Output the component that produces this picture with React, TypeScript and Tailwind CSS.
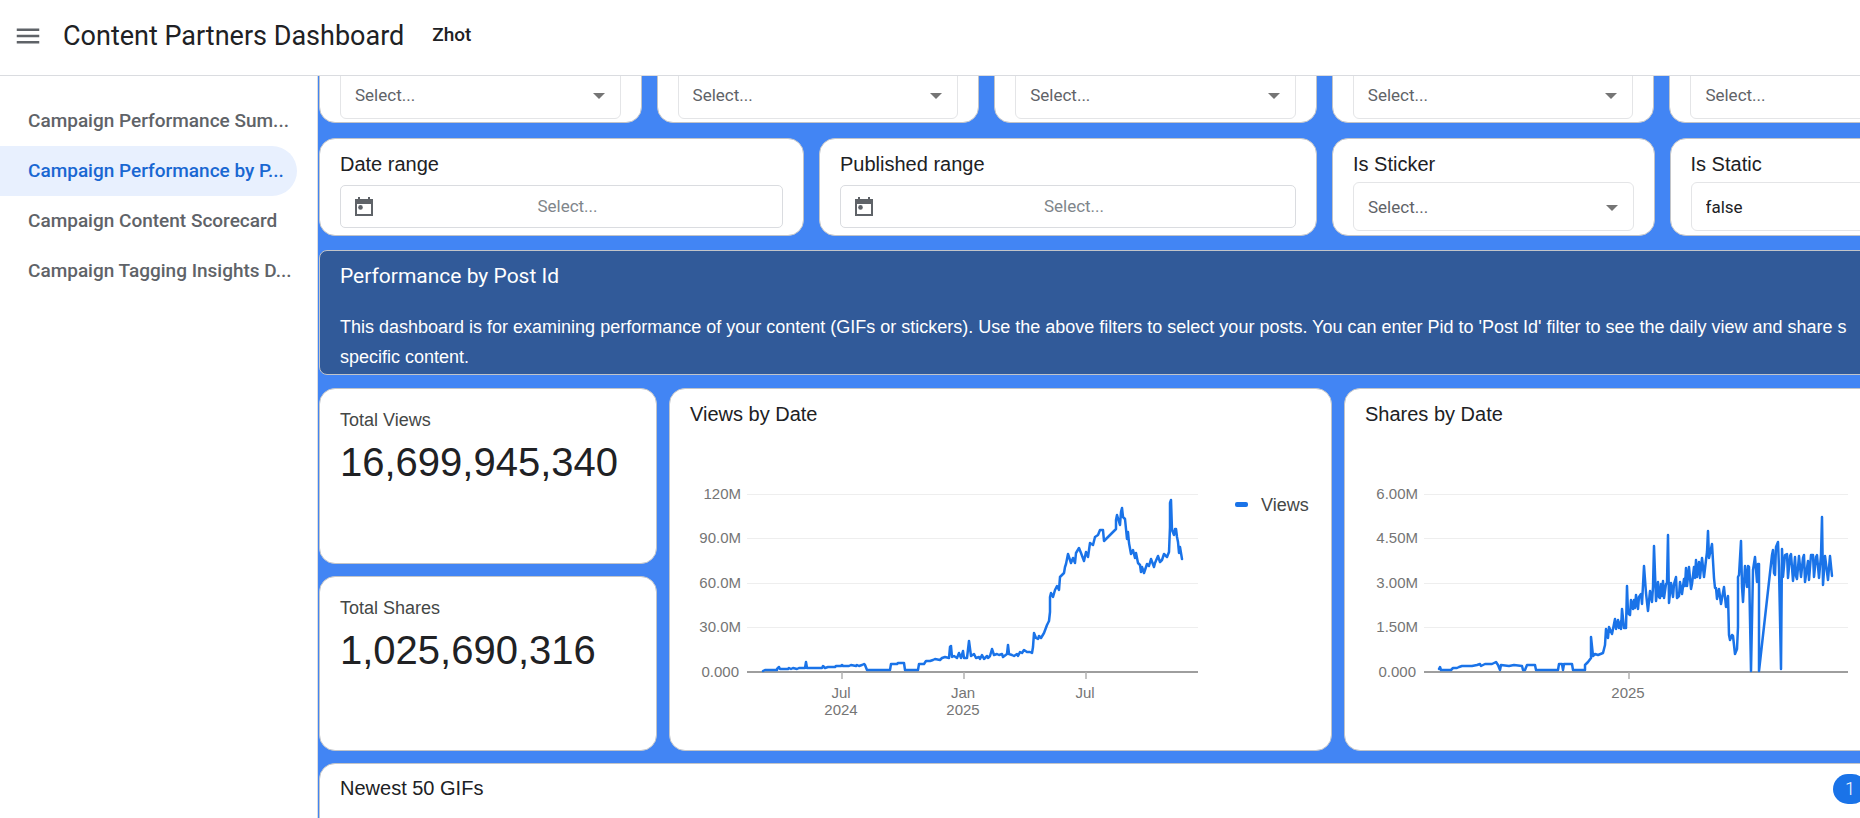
import type { ReactNode } from 'react';
import { MdMenu } from 'react-icons/md';

type Tick = { x: number; lines: string[] };

type ChartProps = {
  title: string;
  legend?: string;
  left: number;
  yLabels: string[];
  ticks: Tick[];
  plotWidth: number;
  points: string;
};

const pages = [
  { name: 'Campaign Performance Sum...', active: false },
  { name: 'Campaign Performance by P...', active: true },
  { name: 'Campaign Content Scorecard', active: false },
  { name: 'Campaign Tagging Insights D...', active: false },
];

const viewsPoints =
  '16,177 18,176 30,176 30,175 32,173 33,175 41,175 42,174 44,175 46,174 50,175 52,174 58,174 59,168 60,174 75,174 76,172 78,174 81,173 88,173 89,172 94,172 95,171 96,172 102,172 104,171 109,172 110,171 112,172 115,171 117,170 118,171 120,176 143,176 144,170 150,170 151,169 157,169 158,176 171,176 172,170 177,170 179,167 183,167 186,166 188,165 193,166 195,164 198,163 202,164 203,153 204,152 205,163 207,162 210,164 212,159 214,164 216,157 217,164 220,164 222,147 224,162 227,160 229,164 232,163 233,165 235,161 237,165 240,162 241,164 243,162 245,155 247,161 250,160 252,161 255,160 256,163 260,160 261,151 262,160 265,161 267,162 270,160 271,162 273,158 275,159 277,156 280,158 283,158 285,159 286,153 287,139 289,144 291,145 292,142 294,144 297,139 300,131 302,127 303,118 303,103 304,99 306,103 308,96 310,92 312,96 313,83 317,79 318,73 319,70 321,60 324,69 326,64 328,69 329,59 332,54 334,59 337,67 339,58 341,63 343,49 346,51 348,43 351,41 353,36 356,36 357,47 369,35 369,26 370,21 373,31 374,18 375,14 376,23 378,25 380,45 381,38 382,49 384,60 386,56 388,64 389,59 391,69 393,71 394,78 395,73 397,79 400,70 402,72 404,65 407,73 408,69 411,62 413,68 415,66 417,60 420,63 422,58 423,33 423,9 424,6 425,36 427,41 428,35 429,35 430,43 431,48 432,59 433,53 434,59 435,65';

const sharesPoints =
  '15,175 16,173 17,176 27,176 29,174 33,174 35,173 38,172 48,172 53,171 56,170 57,172 61,170 68,170 72,168 74,171 76,176 77,171 85,172 90,171 98,172 99,176 101,176 103,171 111,171 112,176 134,176 135,170 138,170 139,176 140,170 148,170 149,176 161,176 161,171 164,168 167,164 167,143 169,162 171,160 174,161 179,159 181,151 182,135 184,144 185,133 188,140 191,125 192,135 194,126 195,134 197,127 197,135 198,115 200,134 202,134 203,92 204,119 206,121 207,106 209,115 210,106 211,114 212,101 214,115 215,103 217,100 218,110 220,72 222,99 224,117 226,97 228,108 229,93 230,52 232,107 234,88 235,103 236,104 237,90 238,102 239,87 240,104 242,90 243,89 244,41 245,109 247,89 249,103 250,90 252,83 253,104 255,102 256,88 258,100 260,85 261,92 262,74 263,92 265,73 267,95 268,90 270,73 271,84 272,66 273,83 275,68 276,84 278,64 280,83 282,66 283,58 284,37 285,64 288,50 290,84 291,94 292,94 293,105 295,95 297,110 300,93 302,113 304,102 305,141 306,146 308,141 309,142 311,160 313,155 314,133 314,83 315,81 317,47 318,93 319,108 321,72 323,93 324,72 325,73 327,177 329,76 331,63 333,88 334,70 335,70 335,177 348,61 349,56 350,79 351,81 352,53 354,48 355,74 357,175 358,55 359,83 361,61 363,60 364,84 366,62 367,60 369,87 371,63 372,82 373,85 375,62 377,83 379,64 380,61 381,88 384,67 385,86 387,61 389,61 390,83 392,63 393,61 395,84 397,61 398,23 399,91 401,62 404,86 406,62 408,82';

const card = 'border border-[#c2c4c8] bg-white';

function CalendarIcon() {
  return (
    <svg viewBox="0 0 18 20" className="h-5 w-[18px] shrink-0 text-[#5f6368]" fill="currentColor" aria-hidden="true">
      <path fillRule="evenodd" d="M3 0h2v2h8V0h2v2h3v17H0V2h3zM2 7v10h14V7z" />
      <circle cx="5.500" cy="10.400" r="2.300" />
    </svg>
  );
}

function SelectCard({ id, label, value }: { id: string; label?: string; value?: string }) {
  return (
    <div className={`${card} min-w-0 flex-1 rounded-2xl px-5 pt-[13px]`}>
      <label htmlFor={id} className="block h-6 text-xl leading-6">{label}</label>
      <div className="relative mt-1.5">
        <select
          id={id}
          aria-label={label ? undefined : 'Filter'}
          className={`block h-[49px] w-full appearance-none rounded-md border border-[#e4e5e7] bg-white pl-3.5 pr-10 pt-0.5 font-[Roboto,sans-serif] text-[17px] ${value ? 'text-[#202124]' : 'text-[#5f6368]'}`}
        >
          <option>{value ?? 'Select...'}</option>
        </select>
        <svg viewBox="0 0 12 6" className="pointer-events-none absolute right-4 top-[23px] h-1.5 w-3 text-[#757575]" fill="currentColor" aria-hidden="true">
          <path d="M0 0h12L6 6z" />
        </svg>
      </div>
    </div>
  );
}

function DateCard({ id, label, width }: { id: string; label: string; width: string }) {
  return (
    <div className={`${card} ${width} shrink-0 rounded-2xl px-5 pt-[13px]`}>
      <label htmlFor={id} className="block text-xl leading-6">{label}</label>
      <button
        id={id}
        type="button"
        className="mt-[9px] flex h-[43px] w-full items-center rounded-[5px] border border-[#dadce0] pl-3.5 pr-5 font-[Roboto,sans-serif] text-[17px] text-[#80868b]"
      >
        <CalendarIcon />
        <span className="flex-1 text-center">Select...</span>
      </button>
    </div>
  );
}

function Scorecard({ name, value }: { name: string; value: string }) {
  return (
    <div className={`${card} flex-1 rounded-2xl px-5 pt-[19px]`}>
      <h3 className="text-lg leading-6 text-[#444746]">{name}</h3>
      <p className="mt-2 text-[40px] leading-[44px]">{value}</p>
    </div>
  );
}

function ChartCard({ title, children }: { title: string; children: ReactNode }) {
  return (
    <section className={`${card} flex w-[663px] shrink-0 flex-col rounded-2xl px-5 pt-[13px]`}>
      <h3 className="text-xl leading-6">{title}</h3>
      {children}
    </section>
  );
}

function LineChart({ title, legend, left, yLabels, ticks, plotWidth, points }: ChartProps) {
  return (
    <svg className="mt-14 h-[240px] w-full" role="img" aria-label={title} fontFamily="Liberation Sans, Arial, sans-serif">
      <g transform={`translate(${left} 12)`}>
        {yLabels.map((label, i) => {
          const y = Math.round(i * 44.4);
          const last = i === yLabels.length - 1;
          return (
            <g key={label}>
              <line x1="0" x2={plotWidth} y1={last ? y : y + 0.5} y2={last ? y : y + 0.5} stroke={last ? '#9e9e9e' : '#eeeeee'} strokeWidth={last ? 2 : 1} />
              <text x={last ? -8 : -6} y={y + 5} textAnchor="end" fontSize="15" fill="#757575">{label}</text>
            </g>
          );
        })}
        {ticks.map((tick) => (
          <g key={tick.x}>
            <line x1={tick.x} x2={tick.x} y1="178" y2="185" stroke="#b0b0b0" strokeWidth="1.500" />
            {tick.lines.map((line, i) => (
              <text key={line} x={tick.x - 1} y={204 + i * 17} textAnchor="middle" fontSize="15" fill="#757575">{line}</text>
            ))}
          </g>
        ))}
        <polyline points={points} fill="none" stroke="#1a73e8" strokeWidth="2.500" strokeLinejoin="round" strokeLinecap="round" />
      </g>
      {legend && (
        <g transform={`translate(${left + plotWidth + 37} 23)`}>
          <rect y="-3" width="13" height="5" rx="2" fill="#1a73e8" />
          <text x="26" y="6" fontSize="18" fill="#444746">{legend}</text>
        </g>
      )}
    </svg>
  );
}

export default function App() {
  return (
    <div className="flex h-screen flex-col overflow-hidden bg-white font-['Liberation_Sans',Arial,sans-serif] text-[#202124]">
      <header className="flex h-[76px] shrink-0 items-center border-b border-[#dadce0] pb-1 pl-[13px] font-[Roboto,sans-serif]">
        <button type="button" aria-label="Toggle navigation" className="text-[#5f6368]">
          <MdMenu size={30} />
        </button>
        <h1 className="ml-5 text-[27px] leading-8">Content Partners Dashboard</h1>
        <span className="ml-7 text-[19px] font-medium">Zhot</span>
      </header>

      <div className="flex min-h-0 flex-1">
        <nav className="w-[318px] shrink-0 border-r border-[#dadce0] pr-5 pt-5 font-[Roboto,sans-serif]">
          {pages.map((page) => (
            <a
              key={page.name}
              href="#"
              aria-current={page.active ? 'page' : undefined}
              className={`flex h-[50px] items-center whitespace-nowrap rounded-r-full pl-7 text-[19px] ${page.active ? 'bg-[#e8f0fe] font-medium text-[#1967d2]' : 'font-medium text-[#5f6368]'}`}
            >
              {page.name}
            </a>
          ))}
        </nav>

        <main className="min-w-0 flex-1 overflow-hidden bg-[#4285f4] pl-px">
          {/* The report canvas keeps its own width and is cut off on the right */}
          <div className="-mt-[50px] w-[1688px]">
            <div className="flex h-[97px] gap-[15px] pr-[15px]">
              <SelectCard id="filter-1" />
              <SelectCard id="filter-2" />
              <SelectCard id="filter-3" />
              <SelectCard id="filter-4" />
              <SelectCard id="filter-5" />
            </div>

            <div className="mt-[15px] flex h-[98px] gap-[15px] pr-[15px]">
              <DateCard id="date-range" label="Date range" width="w-[485px]" />
              <DateCard id="published-range" label="Published range" width="w-[498px]" />
              <SelectCard id="is-sticker" label="Is Sticker" />
              <SelectCard id="is-static" label="Is Static" value="false" />
            </div>

            <section className="mt-3.5 h-[125px] rounded-lg border border-[#c2c4c8] bg-[#315a99] px-5 pt-[11px] text-white">
              <h2 className="font-[Roboto,sans-serif] text-[21px] leading-7">Performance by Post Id</h2>
              <p className="mt-[22px] text-lg leading-[30px]">
                This dashboard is for examining performance of your content (GIFs or stickers). Use the above filters to select your posts. You can enter Pid to 'Post Id' filter to see the daily view and share s
                <br />
                specific content.
              </p>
            </section>

            <div className="mt-[13px] flex h-[363px] gap-3">
              <div className="flex w-[338px] shrink-0 flex-col gap-3">
                <Scorecard name="Total Views" value="16,699,945,340" />
                <Scorecard name="Total Shares" value="1,025,690,316" />
              </div>
              <ChartCard title="Views by Date">
                <LineChart
                  title="Views by date"
                  legend="Views"
                  left={57}
                  yLabels={['120M', '90.0M', '60.0M', '30.0M', '0.000']}
                  ticks={[
                    { x: 95, lines: ['Jul', '2024'] },
                    { x: 217, lines: ['Jan', '2025'] },
                    { x: 339, lines: ['Jul'] },
                  ]}
                  plotWidth={451}
                  points={viewsPoints}
                />
              </ChartCard>
              <ChartCard title="Shares by Date">
                <LineChart
                  title="Shares by date"
                  left={59}
                  yLabels={['6.00M', '4.50M', '3.00M', '1.50M', '0.000']}
                  ticks={[{ x: 205, lines: ['2025'] }]}
                  plotWidth={424}
                  points={sharesPoints}
                />
              </ChartCard>
            </div>

            <section className={`${card} mt-3 flex h-[400px] items-start justify-between rounded-2xl pl-5 pr-[139px] pt-2.5`}>
              <h3 className="mt-0.5 text-xl leading-6">Newest 50 GIFs</h3>
              <button type="button" className="h-[30px] w-[34px] rounded-full bg-[#1a73e8] font-[Roboto,sans-serif] text-lg font-light text-white">
                1
              </button>
            </section>
          </div>
        </main>
      </div>
    </div>
  );
}
